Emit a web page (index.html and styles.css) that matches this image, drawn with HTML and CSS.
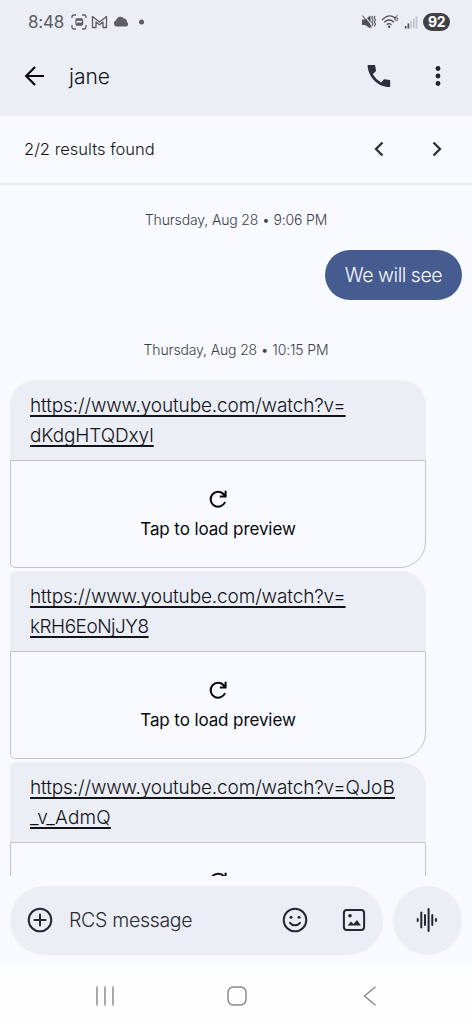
FILE: index.html
```html
<!DOCTYPE html>
<html lang="en">
<head>
<meta charset="utf-8">
<title>Messages</title>
<link rel="stylesheet" href="styles.css">
</head>
<body>
<div class="phone">
  <header class="top">
    <div class="status">
      <span class="clock">8:48</span>
      <svg class="status-left" width="76" height="18" viewBox="0 0 76 18">
        <g fill="none" stroke="#5c5d62" stroke-width="1.3">
          <path d="M1 5V4Q1 2 3 2H5M11 2H13Q15 2 15 4V5M15 12V13Q15 16 13 16H11M5 16H3Q1 16 1 14V12"/>
          <rect x="5" y="6" width="6.5" height="6" rx="1"/>
          <path d="M21.500 14.500V3.500L28.500 9L35.500 3.500V14.500H32V9L28.500 11.800L25 9V14.500Z" stroke-linejoin="round"/>
        </g>
        <path fill="#5c5d62" d="M5 11.500L7.500 9L9 10L11 9V12H5ZM5 6H11.500V7.800H5ZM45 13.500A3.400 3.400 0 0 1 45 7.200A4.500 4.500 0 0 1 53 5.500A3.500 3.500 0 0 1 56 9A2.500 2.500 0 0 1 55.500 13.500Z"/>
        <circle cx="70.500" cy="9" r="2.500" fill="#5c5d62"/>
      </svg>
      <svg class="status-right" width="58" height="18" viewBox="0 0 58 18">
        <path fill="#505157" d="M1 6.500H4L9.500 2.500V15.500L4 12H1Z"/>
        <path d="M2.500 1.500L12 13.500" stroke="#ebeef5" stroke-width="1.200"/>
        <path d="M1.500 2.500L10.500 14.500M11.500 3L10.700 5L12 7L10.700 9L12 11L10.700 13M14 3L13.200 5L14.500 7L13.200 9L14.500 11L13.200 13.500" fill="none" stroke="#505157" stroke-width="1.100"/>
        <path d="M21 7Q28 0 34 5M23.200 9.200Q28 4.700 33 9.200M25.700 11.700Q28 9.500 30.500 11.700" fill="none" stroke="#505157" stroke-width="1.300"/>
        <circle cx="28.100" cy="13.700" r="1.200" fill="#505157"/>
        <path d="M36.600 2.300Q33.700 3.500 33.800 6" fill="none" stroke="#505157"/>
        <circle cx="35.300" cy="6.100" r="1.500" fill="none" stroke="#505157"/>
        <path d="M44.700 15.500V13M47.400 15.500V10.500" stroke="#505157" stroke-width="1.700"/>
        <path d="M50.100 15.500V8.500M52.800 15.500V5.800M55.500 15.500V3.500" stroke="#c3c5cb" stroke-width="1.700"/>
      </svg>
      <span class="battery">92</span>
    </div>
    <div class="appbar">
      <svg class="back" width="22" height="22" viewBox="0 0 22 22" fill="none" stroke="#08090c" stroke-width="2.200"><path d="M20 11H2.200M11 2L2.200 11L11 20"/></svg>
      <h1 class="contact">jane</h1>
      <svg class="call" width="24" height="24" viewBox="0 0 24 24"><path fill="#2e313b" d="M1 1H7.500Q8.100 1 8.200 1.700L9 6.500Q9 7.100 8.600 7.500L5.700 10.300Q9 15.700 14.200 18.400L16.800 15.600Q17.300 15.100 17.900 15.200L22.500 16.100Q23.200 16.300 23.200 17V22.400Q23.200 23.100 22.500 23.100C10 23.100 1 12 .6 1.500Q.6 1 1 1Z"/></svg>
      <svg class="more" width="6" height="22" viewBox="0 0 6 22" fill="#20232c"><circle cx="3" cy="3.500" r="2.400"/><circle cx="3" cy="11" r="2.400"/><circle cx="3" cy="18.500" r="2.400"/></svg>
    </div>
  </header>
  <div class="results">
    <span class="results-text">2/2 results found</span>
    <svg class="prev" width="10" height="16" viewBox="0 0 10 16"><path d="M8.500 1.500L2 8L8.500 14.500"/></svg>
    <svg class="next" width="10" height="16" viewBox="0 0 10 16"><path d="M1.500 1.500L8 8L1.500 14.500"/></svg>
  </div>
  <main class="thread">
    <time class="date">Thursday, Aug 28 • 9:06 PM</time>
    <div class="sent"><span>We will see</span></div>
    <time class="date">Thursday, Aug 28 • 10:15 PM</time>
    <article class="card">
      <p class="link"><a>https://www.youtube.com/watch?v=<br>dKdgHTQDxyI</a></p>
      <div class="preview">
        <svg class="reload" width="20" height="20" viewBox="0 0 20 20"><path d="M17.100 13A7.500 7.500 0 1 1 16 5.500L17.500 7.200M17.600 1.700V7.400H11.800"/></svg>
        <span>Tap to load preview</span>
      </div>
    </article>
    <article class="card">
      <p class="link"><a>https://www.youtube.com/watch?v=<br><span class="tight">kRH6EoNjJY8</span></a></p>
      <div class="preview">
        <svg class="reload" width="20" height="20" viewBox="0 0 20 20"><path d="M17.100 13A7.500 7.500 0 1 1 16 5.500L17.500 7.200M17.600 1.700V7.400H11.800"/></svg>
        <span>Tap to load preview</span>
      </div>
    </article>
    <article class="card">
      <p class="link"><a>https://www.youtube.com/watch?v=<span class="wide">QJoB<br>_v_AdmQ</span></a></p>
      <div class="preview">
        <svg class="reload" width="20" height="20" viewBox="0 0 20 20"><path d="M17.100 13A7.500 7.500 0 1 1 16 5.500L17.500 7.200M17.600 1.700V7.400H11.800"/></svg>
      </div>
    </article>
  </main>
  <footer class="composer">
    <div class="input">
      <svg class="plus" width="26" height="26" viewBox="0 0 26 26"><circle cx="13" cy="13" r="11.300"/><path d="M13 7.500V18.500M7.500 13H18.500"/></svg>
      <span class="hint">RCS message</span>
      <svg class="smile" width="26" height="26" viewBox="0 0 26 26"><circle cx="13" cy="13" r="11.300"/><path d="M8 15.800Q9.800 18.300 13 18.300T18 15.800"/><g class="dot"><circle cx="9" cy="10.200" r="1.500"/><circle cx="17" cy="10.200" r="1.500"/></g></svg>
      <svg class="photo" width="24" height="24" viewBox="0 0 24 24"><rect x="1.900" y="1.900" width="20.200" height="20.200" rx="3"/><path class="dot" d="M5.500 17.500L9 13.500L11.500 16L15 12L19 17.500Z"/><circle class="dot" cx="8" cy="7.800" r="1.800"/></svg>
    </div>
    <div class="voice"><svg width="22" height="26" viewBox="0 0 22 26"><path d="M1.700 12V14M5.300 5.500V20.500M9 8V18M12.600 2V24M16.300 8V18M20 12V14"/></svg></div>
  </footer>
  <nav class="nav">
    <svg width="20" height="20" viewBox="0 0 20 20"><path d="M2 .5V19.500M10 .5V19.500M18 .5V19.500"/></svg>
    <svg class="home" width="20" height="20" viewBox="0 0 20 20"><rect x="1" y="1" width="18" height="18" rx="5.500"/></svg>
    <svg width="14" height="20" viewBox="0 0 14 20"><path d="M12.500 .7L1.500 10L12.500 19.300"/></svg>
  </nav>
</div>
</body>
</html>
```
FILE: styles.css
```css
* { box-sizing: border-box; }
body { margin: 0; font-family: Inter, Roboto, sans-serif; color: #111319; }
svg { display: block; flex: none; }
.phone { width: 472px; height: 1024px; display: flex; flex-direction: column; overflow: hidden; background: #f9faff; white-space: nowrap; }
.top { height: 116px; flex: none; background: #ebeef5; }
.status { height: 37px; padding: 7px 22px 0 28px; display: flex; align-items: center; }
.clock { width: 43px; font-size: 17px; font-weight: 400; letter-spacing: -.2px; color: #5c5d62; }
.status-right { margin-left: auto; }
.battery { width: 27px; height: 18px; margin-left: 4px; border-radius: 9px; background: #414247; color: #fff; font-size: 14px; font-weight: 700; line-height: 18px; text-align: center; letter-spacing: -.4px; }
.appbar { height: 78px; padding: 0 31px 0 24px; display: flex; align-items: center; }
.contact { margin: 1px 0 0 23px; font-size: 21px; font-weight: 350; line-height: 29px; letter-spacing: 0; }
.call { margin-left: auto; }
.more { margin-left: 44px; }
.results { height: 69px; flex: none; padding: 0 30px 1px 24px; display: flex; align-items: center; border-bottom: 2px solid #e8eaef; }
.results-text { font-size: 16.500px; font-weight: 350; letter-spacing: 0; }
.results path { fill: none; stroke: #2d2e34; stroke-width: 2.300; }
.prev { margin-left: auto; }
.next { margin-left: 48px; }
.thread { height: 691px; flex: none; overflow: hidden; padding: 25px 10px 0; display: flex; flex-direction: column; }
.date { align-self: center; height: 20px; flex: none; line-height: 20px; font-size: 14px; font-weight: 350; letter-spacing: -.15px; color: #3d3f47; }
.sent { align-self: flex-end; width: 137px; height: 50px; flex: none; margin: 20px 0 40px; border-radius: 25px; background: #465c90; color: #f8f9ff; font-size: 19.500px; font-weight: 350; letter-spacing: -.45px; line-height: 51px; text-align: center; }
.card { width: 416px; height: 188px; flex: none; margin-bottom: 3px; }
.date + .card { margin-top: 20px; }
.link { height: 80px; margin: 0; padding: 11px 20px 9px; border-radius: 25px 25px 0 0; background: #ebeef5; font-size: 19px; line-height: 30px; font-weight: 300; letter-spacing: -.13px; }
.card + .card .link { border-top-left-radius: 6px; }
.link a { text-decoration: underline; text-decoration-thickness: 1.500px; text-underline-offset: 3px; text-decoration-skip-ink: none; }
.tight { letter-spacing: -.5px; }
.wide { letter-spacing: .15px; }
.preview { height: 108px; padding-top: 28px; border: 1px solid #c2c4cc; border-radius: 0 0 26px 5px; display: flex; flex-direction: column; align-items: center; color: #08090c; font-size: 17px; line-height: 24px; letter-spacing: -.1px; }
.preview span { margin-top: 8px; }
.reload { fill: none; stroke: #08090c; stroke-width: 2; }
.composer { height: 89px; flex: none; padding: 10px 10px 0; display: flex; gap: 10px; }
.input { width: 373px; height: 69px; padding: 0 17px 1px 17px; border-radius: 35px; background: #ebeef5; display: flex; align-items: center; }
.composer svg { fill: none; stroke: #252832; stroke-width: 2; stroke-linecap: round; }
.composer .dot { fill: #252832; stroke: none; }
.hint { margin-left: 16px; font-size: 19.500px; color: #282b34; font-weight: 350; letter-spacing: -.3px; }
.smile { margin-left: auto; }
.photo { margin-left: 34px; }
.voice { width: 69px; height: 69px; padding: 0 2px 1px 0; border-radius: 50%; background: #ebeef5; display: flex; align-items: center; justify-content: center; }
.nav { height: 59px; flex: none; padding: 3px 95px 0; background: #fefefe; display: flex; align-items: center; }
.nav svg { fill: none; stroke: #85868a; stroke-width: 1.400; }
.home { margin: 0 auto 0 112px; }
```
